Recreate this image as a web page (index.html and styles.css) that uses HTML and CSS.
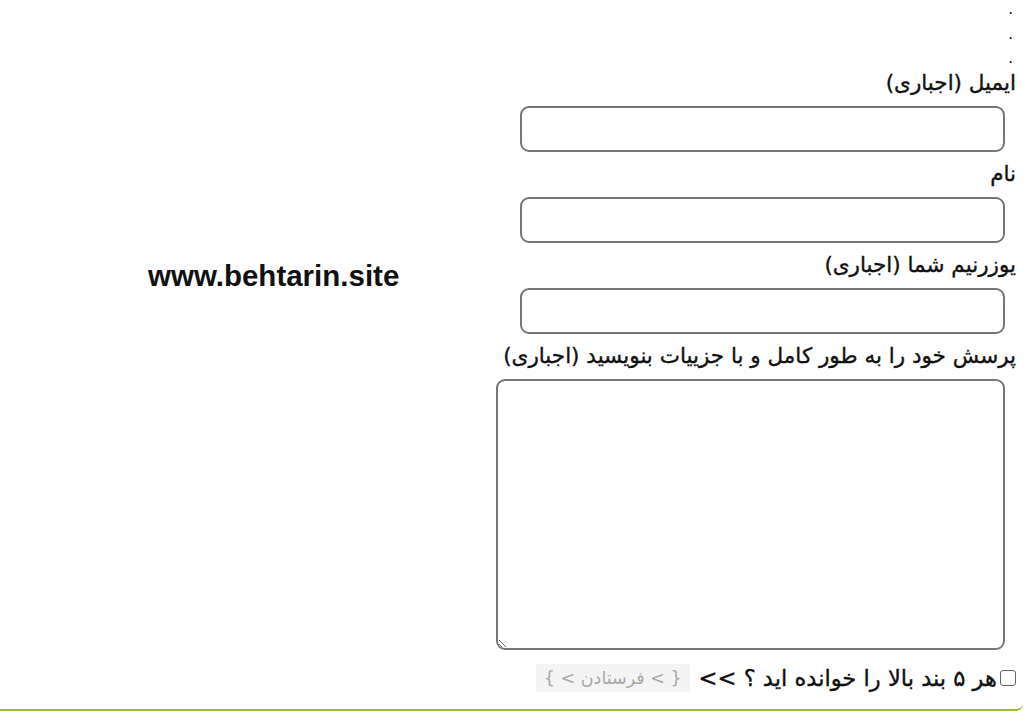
FILE: index.html
```html
<!DOCTYPE html>
<html lang="fa">
<head>
<meta charset="utf-8">
<link rel="stylesheet" href="styles.css">
</head>
<body>
<div class="page">
  <div class="side">
    <div class="site">www.behtarin.site</div>
  </div>
  <form class="form" dir="rtl">
    <div class="dot">.</div>
    <div class="dot">.</div>
    <div class="dot">.</div>
    <label class="lbl first">ایمیل (اجباری)</label>
    <input class="field" type="text">
    <label class="lbl">نام</label>
    <input class="field" type="text">
    <label class="lbl">یوزرنیم شما (اجباری)</label>
    <input class="field" type="text">
    <label class="lbl">پرسش خود را به طور کامل و با جزییات بنویسید (اجباری)</label>
    <textarea class="area"></textarea>
    <div class="agree">
      <span class="box"></span>
      <span class="agree-text">هر ۵ بند بالا را خوانده اید ؟ &gt;&gt;</span>
      <span class="send">{ &gt; فرستادن &gt; }</span>
    </div>
  </form>
</div>
<div class="bottom"></div>
</body>
</html>
```
FILE: styles.css
```css
html, body {
  margin: 0;
  padding: 0;
  background: #fff;
}
body {
  width: 1024px;
  height: 711px;
  overflow: hidden;
  font-family: "DejaVu Sans", sans-serif;
  color: #111;
}
.page {
  display: flex;
  height: 704px;
}
.side {
  flex: 1;
  padding-top: 259px;
  padding-left: 148px;
}
.site {
  font-family: "Liberation Sans", Arial, sans-serif;
  font-weight: bold;
  font-size: 29.5px;
  color: #111;
}
.form {
  width: 527px;
  padding-right: 8px;
  margin-top: -3px;
  display: flex;
  flex-direction: column;
  align-items: flex-start;
  font-size: 21.5px;
}
.dot {
  height: 24.5px;
  line-height: 24.5px;
  font-size: 15px;
  padding-right: 3px;
}
.lbl {
  display: block;
  font-size: 21.5px;
  line-height: 26px;
  height: 26px;
  margin-top: 9px;
  -webkit-text-stroke: 0.35px #111;
}
.lbl.first {
  margin-top: -0.5px;
}
.field {
  box-sizing: border-box;
  width: 485px;
  height: 46px;
  margin: 10px 11px 0 0;
  border: 2px solid #777;
  border-radius: 9px;
  background: #fff;
}
.area {
  box-sizing: border-box;
  width: 509px;
  height: 271px;
  margin: 10px 11px 0 0;
  border: 2px solid #777;
  border-radius: 9px;
  background: #fff;
  resize: both;
}
.agree {
  display: flex;
  align-items: center;
  margin-top: 14px;
  height: 28px;
}
.box {
  box-sizing: border-box;
  width: 16px;
  height: 16px;
  border: 1.5px solid #666;
  border-radius: 3px;
  margin-left: 3px;
}
.agree-text {
  font-size: 22.6px;
  line-height: 28px;
  margin-left: 9px;
  -webkit-text-stroke: 0.35px #111;
}
.send {
  background: #f4f4f4;
  color: #a8a8a8;
  padding: 0 8px;
  height: 28px;
  line-height: 28px;
  font-size: 17.5px;
}
.bottom {
  height: 5px;
  border-bottom: 2px solid #9cbe35;
  border-bottom-right-radius: 10px;
  margin-right: 1px;
}
```
